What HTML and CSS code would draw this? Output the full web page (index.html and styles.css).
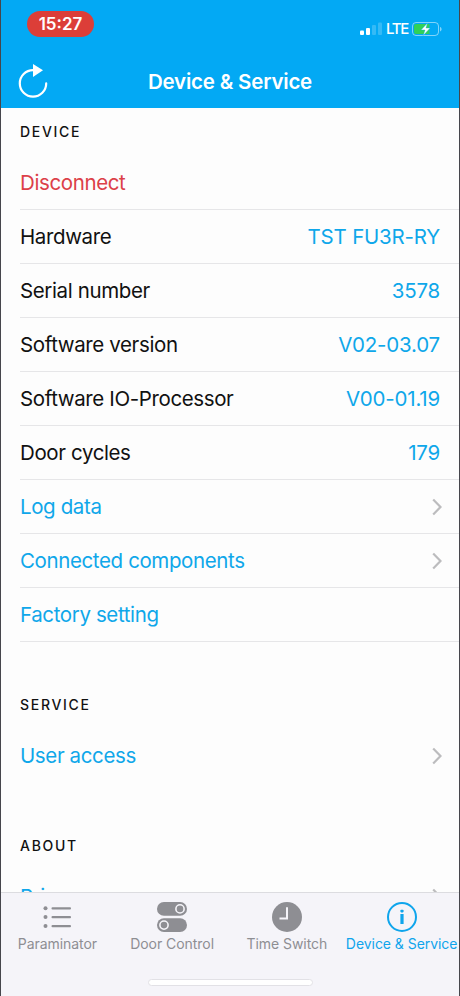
FILE: index.html
```html
<!DOCTYPE html>
<html lang="en">

<head>
    <meta charset="UTF-8">
    <meta name="viewport" content="width=device-width, initial-scale=1.0">
    <title>Device &amp; Service</title>
    <link rel="stylesheet" href="styles.css">
</head>

<body>

    <div class="app">
        <header class="header">
            <div class="status-bar">
                <span class="time">15:27</span>
                <div class="status-icons">
                    <svg width="22" height="14" viewBox="0 0 22 14" fill="#fff">
                        <rect x="0" y="8.5" width="4" height="4.5" rx="1" />
                        <rect x="6" y="6" width="4" height="7" rx="1" />
                        <rect x="12" y="3" width="4" height="10" rx="1" opacity="0.2" />
                        <rect x="18" y="0.5" width="4" height="12.5" rx="1" opacity="0.2" />
                    </svg>
                    <span class="network">LTE</span>
                    <svg width="30" height="14" viewBox="0 0 30 14">
                        <rect x="0.5" y="0.5" width="26" height="13" rx="3.5" fill="none" stroke="#fff" stroke-opacity="0.5" />
                        <path d="M4 2h13.500v10H4a2 2 0 0 1-2-2V4a2 2 0 0 1 2-2z" fill="#30d158" />
                        <path d="M28 5v4.400c1-.4 1.600-1.200 1.600-2.200s-.6-1.800-1.600-2.200z" fill="#fff" opacity="0.5" />
                        <path d="M15.500 1L9 8h4l-1.800 5.500L18.200 6h-4.200z" fill="#fff" stroke="#03a9f4" stroke-width="0.400" />
                    </svg>
                </div>
            </div>
            <div class="nav-bar">
                <button class="refresh-btn" aria-label="Refresh">
                    <svg width="30" height="36" viewBox="0 0 30 36">
                        <path d="M15 7.200A13.200 13.200 0 1 0 28.200 20.400" fill="none" stroke="#fff" stroke-width="2.200" stroke-linecap="round" />
                        <path d="M15 1l10 6.300L15 14z" fill="#fff" />
                    </svg>
                </button>
                <h1>Device &amp; Service</h1>
            </div>
        </header>

        <main class="content">
            <section>
                <h2>DEVICE</h2>
                <ul class="list">
                    <li class="row danger"><span>Disconnect</span></li>
                    <li class="row"><span>Hardware</span><span class="value">TST FU3R-RY</span></li>
                    <li class="row"><span>Serial number</span><span class="value">3578</span></li>
                    <li class="row"><span>Software version</span><span class="value">V02-03.07</span></li>
                    <li class="row"><span>Software IO-Processor</span><span class="value">V00-01.19</span></li>
                    <li class="row"><span>Door cycles</span><span class="value">179</span></li>
                    <li class="row link">
                        <span>Log data</span>
                        <svg class="chevron" viewBox="0 0 10 18"><path d="M1.200 1.500L8.500 9l-7.300 7.500" /></svg>
                    </li>
                    <li class="row link">
                        <span>Connected components</span>
                        <svg class="chevron" viewBox="0 0 10 18"><path d="M1.200 1.500L8.500 9l-7.300 7.500" /></svg>
                    </li>
                    <li class="row link"><span>Factory setting</span></li>
                </ul>
            </section>

            <section>
                <h2>SERVICE</h2>
                <ul class="list plain">
                    <li class="row link">
                        <span>User access</span>
                        <svg class="chevron" viewBox="0 0 10 18"><path d="M1.200 1.500L8.500 9l-7.300 7.500" /></svg>
                    </li>
                </ul>
            </section>

            <section>
                <h2>ABOUT</h2>
                <ul class="list plain">
                    <li class="row link">
                        <span>Privacy</span>
                        <svg class="chevron" viewBox="0 0 10 18"><path d="M1.200 1.500L8.500 9l-7.300 7.500" /></svg>
                    </li>
                </ul>
            </section>
        </main>

        <footer class="footer">
            <nav class="tabs">
                <a class="tab">
                    <svg width="30" height="30" viewBox="0 0 30 30" fill="currentColor">
                        <circle cx="3.500" cy="6.300" r="2" />
                        <circle cx="3.500" cy="15" r="2" />
                        <circle cx="3.500" cy="24" r="2" />
                        <rect x="9.500" y="5.200" width="19.500" height="2.300" rx="1" />
                        <rect x="9.500" y="13.900" width="19.500" height="2.300" rx="1" />
                        <rect x="9.500" y="22.900" width="19.500" height="2.300" rx="1" />
                    </svg>
                    <span>Paraminator</span>
                </a>
                <a class="tab">
                    <svg width="30" height="30" viewBox="0 0 30 30">
                        <rect x="0" y="0" width="30" height="13.800" rx="6.900" fill="currentColor" />
                        <rect x="0" y="16.200" width="30" height="13.800" rx="6.900" fill="currentColor" />
                        <circle cx="23" cy="6.900" r="4.100" fill="none" stroke="#f5f4f9" stroke-width="1.600" />
                        <circle cx="7" cy="23.100" r="4.100" fill="none" stroke="#f5f4f9" stroke-width="1.600" />
                    </svg>
                    <span>Door Control</span>
                </a>
                <a class="tab">
                    <svg width="30" height="30" viewBox="0 0 30 30">
                        <circle cx="15" cy="15" r="15" fill="currentColor" />
                        <path d="M15 5.200V16.500H7.500" fill="none" stroke="#f5f4f9" stroke-width="2" />
                    </svg>
                    <span>Time Switch</span>
                </a>
                <a class="tab active">
                    <svg width="30" height="30" viewBox="0 0 30 30">
                        <circle cx="15" cy="15" r="14" fill="none" stroke="currentColor" stroke-width="2" />
                        <rect x="13.400" y="12" width="3.200" height="10" fill="currentColor" />
                        <rect x="13.400" y="7.800" width="3.200" height="2.600" rx="0.800" fill="currentColor" />
                    </svg>
                    <span>Device &amp; Service</span>
                </a>
            </nav>
            <div class="home-indicator"></div>
        </footer>
    </div>

</body>

</html>
```
FILE: styles.css
```css
* {
    box-sizing: border-box;
    margin: 0;
    padding: 0;
    font-family: Inter, "Liberation Sans", sans-serif;
}

body {
    background-color: #fdfdfd;
    color: #111;
}

.app {
    display: flex;
    flex-direction: column;
    height: 100vh;
    overflow: hidden;
    border-left: 1px solid #46464c;
    border-right: 1px solid #46464c;
}

.header {
    flex: none;
    height: 108px;
    background-color: #03a9f4;
    color: #fff;
}

.status-bar {
    display: flex;
    align-items: flex-start;
    justify-content: space-between;
    height: 54px;
    padding: 11px 17px 0 26px;
}

.time {
    width: 67px;
    height: 26px;
    border-radius: 13px;
    background-color: #dc3e38;
    font-size: 17px;
    font-weight: 600;
    line-height: 26px;
    text-align: center;
}

.status-icons {
    display: flex;
    align-items: center;
    gap: 4px;
    padding-top: 9px;
}

.network {
    width: 22px;
    font-size: 15px;
    font-weight: 500;
    line-height: 18px;
    letter-spacing: -1.3px;
}

.nav-bar {
    display: grid;
    grid-template-columns: 80px 1fr 80px;
    align-items: center;
    height: 54px;
}

.refresh-btn {
    display: flex;
    padding-left: 17px;
    border: none;
    background: none;
    cursor: pointer;
}

h1 {
    font-size: 20.5px;
    font-weight: 600;
    letter-spacing: -0.2px;
    line-height: 26px;
    padding-top: 1px;
    text-align: center;
    white-space: nowrap;
}

.content {
    flex: 1;
    min-height: 0;
    overflow: hidden;
}

section {
    margin-bottom: 39px;
}

h2 {
    height: 48px;
    padding-left: 19px;
    font-size: 14px;
    font-weight: 450;
    line-height: 48px;
    letter-spacing: 1.7px;
}

.list {
    list-style: none;
    padding-left: 19px;
}

.row {
    display: flex;
    align-items: center;
    justify-content: space-between;
    height: 54px;
    padding-right: 19px;
    border-bottom: 1px solid #e6e6e8;
    font-size: 20.5px;
    letter-spacing: -0.38px;
    white-space: nowrap;
}

.plain .row {
    border-bottom-color: transparent;
}

.danger {
    color: #dc4048;
}

.value,
.link {
    color: #0fa7ea;
}

.value {
    letter-spacing: -0.2px;
}

.chevron {
    width: 10px;
    height: 18px;
    margin-right: -2px;
    fill: none;
    stroke: #bcbcbe;
    stroke-width: 2.2;
}

.footer {
    flex: none;
    height: 104px;
    border-top: 1px solid #dcdce0;
    background-color: #f5f4f9;
}

.tabs {
    display: grid;
    grid-template-columns: repeat(4, 1fr);
    height: 86px;
    margin-left: -1px;
    padding-top: 9px;
}

.tab {
    display: flex;
    flex-direction: column;
    align-items: center;
    gap: 3px;
    color: #8e8e93;
    font-size: 14px;
    line-height: 18px;
    letter-spacing: -0.05px;
    white-space: nowrap;
}

.active {
    color: #0fa5ec;
}

.home-indicator {
    width: 165px;
    height: 7px;
    margin: 0 auto;
    border: 1px solid #e2e1e6;
    border-radius: 4px;
    background-color: #fff;
}
```
